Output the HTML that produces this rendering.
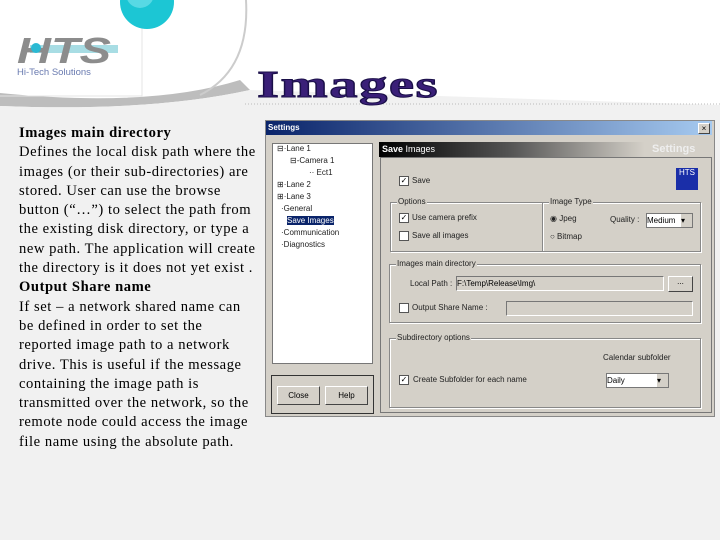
<!DOCTYPE html>
<html><head><style>
body{margin:0;width:720px;height:540px;background:#f1f1f1;position:relative;overflow:hidden;font-family:"Liberation Sans",sans-serif}
.t{position:absolute;left:19px;top:124px;font-family:"Liberation Serif",serif;font-size:14.6px;letter-spacing:0.55px;line-height:19.3px;color:#000;white-space:nowrap}
.d{position:absolute;font-size:8px;color:#222;white-space:nowrap}
.box{position:absolute;border:1px solid #888;box-shadow:1px 1px 0 #fff inset,1px 1px 0 #fff}
.lab{position:absolute;background:#d4d0c8;font-size:8px;padding:0 1px;top:-6px;left:6px;color:#222}
.cb{position:absolute;width:8px;height:8px;background:#fff;border:1px solid #555;font-size:8px;line-height:8px;text-align:center}
.in{position:absolute;background:#d4d0c8;border:1px solid #777;border-right-color:#fff;border-bottom-color:#fff}
.btn{position:absolute;background:#d4d0c8;border:1px solid #fff;border-right-color:#444;border-bottom-color:#444;font-size:8px;text-align:center}
</style></head><body>
<svg style="position:absolute;left:0;top:0" width="720" height="110">
<rect width="720" height="110" fill="#fff"/>
<path d="M0,93 Q150,108 240,80 L250,90 Q150,112 0,106 Z" fill="#bdbdbd"/>
<path d="M0,106 Q150,112 250,90 L720,105 L720,110 L0,110Z" fill="#f1f1f1"/>
<path d="M246,0 Q250,70 200,95" stroke="#ccc" stroke-width="2" fill="none"/>
<path d="M0,96 L142,96 L142,0" stroke="#e4e4e4" fill="none"/>
<circle cx="147" cy="2" r="27" fill="#1cc6d4"/>
<circle cx="140" cy="-6" r="14" fill="#7ee6ee" opacity=".6"/>
<line x1="245" y1="104" x2="720" y2="104" stroke="#bbb" stroke-dasharray="1,2"/>
<rect x="30" y="45" width="88" height="8" fill="#a8dde4"/>
<text x="17" y="63" font-family="Liberation Sans" font-weight="bold" font-style="italic" font-size="36" fill="#8c8c8c" textLength="94" lengthAdjust="spacingAndGlyphs">HTS</text>
<circle cx="36" cy="48" r="5" fill="#2bb9d3"/>
<text x="17" y="75" font-family="Liberation Sans" font-size="9.5" fill="#6a7bb0">Hi-Tech Solutions</text>
<text x="257" y="97" font-family="Liberation Serif" font-weight="bold" font-size="38" fill="#3a1f78" stroke="#1a0f48" stroke-width="1" letter-spacing="1" textLength="182" lengthAdjust="spacingAndGlyphs">Images</text>
</svg>
<div class="t"><b>Images main directory</b><br>Defines the local disk path where the<br>images (or their sub-directories) are<br>stored. User can use the browse<br>button (“…”) to select the path from<br>the existing disk directory, or type a<br>new path. The application will create<br>the directory is it does not yet exist .<br><b>Output Share name</b><br>If set – a network shared name can<br>be defined in order to set the<br>reported image path to a network<br>drive. This is useful if the message<br>containing the image path is<br>transmitted over the network, so the<br>remote node could access the image<br>file name using the absolute path.</div>

<div style="position:absolute;left:265px;top:120px;width:448px;height:295px;background:#d4d0c8;border:1px solid #888"></div>
<div style="position:absolute;left:266px;top:121px;width:446px;height:14px;background:linear-gradient(90deg,#0a246a,#a6caf0);color:#fff;font-size:8px;font-weight:bold;line-height:14px;padding-left:2px;box-sizing:border-box">Settings</div>
<div class="btn" style="left:698px;top:123px;width:10px;height:9px;line-height:9px;color:#000">×</div>
<div style="position:absolute;left:272px;top:143px;width:99px;height:219px;background:#fff;border:1px solid #777"></div>
<div class="d" style="left:277px;top:144px">⊟·Lane 1</div>
<div class="d" style="left:290px;top:156px">⊟-Camera 1</div>
<div class="d" style="left:309px;top:168px">·· Ect1</div>
<div class="d" style="left:277px;top:180px">⊞·Lane 2</div>
<div class="d" style="left:277px;top:192px">⊞·Lane 3</div>
<div class="d" style="left:281px;top:204px">·General</div>
<div class="d" style="left:287px;top:216px;background:#0a246a;color:#fff">Save Images</div>
<div class="d" style="left:281px;top:228px">·Communication</div>
<div class="d" style="left:281px;top:240px">·Diagnostics</div>
<div style="position:absolute;left:271px;top:375px;width:101px;height:37px;border:1px solid #333"></div>
<div class="btn" style="left:277px;top:386px;width:41px;height:17px;line-height:17px">Close</div>
<div class="btn" style="left:325px;top:386px;width:41px;height:17px;line-height:17px">Help</div>
<div style="position:absolute;left:379px;top:142px;width:332px;height:15px;background:linear-gradient(90deg,#000 0%,#555 40%,#d4d0c8 80%);color:#fff;font-size:9px;line-height:15px;padding-left:3px;box-sizing:border-box"><b>Save</b> Images</div>
<div style="position:absolute;left:652px;top:143px;font-size:11px;font-weight:bold;color:#eee">Settings</div>
<div style="position:absolute;left:380px;top:157px;width:330px;height:254px;border:1px solid #777"></div>
<div style="position:absolute;left:676px;top:168px;width:22px;height:22px;background:#1a2ea8;color:#fff;font-size:8px;text-align:center">HTS</div>
<div class="cb" style="left:399px;top:176px">✓</div><div class="d" style="left:412px;top:176px">Save</div>
<div class="box" style="left:390px;top:202px;width:151px;height:48px"><span class="lab">Options</span></div>
<div class="cb" style="left:399px;top:213px">✓</div><div class="d" style="left:412px;top:213px">Use camera prefix</div>
<div class="cb" style="left:399px;top:231px"></div><div class="d" style="left:412px;top:231px">Save all images</div>
<div class="box" style="left:542px;top:202px;width:157px;height:48px"><span class="lab">Image Type</span></div>
<div class="d" style="left:550px;top:214px">◉ Jpeg</div><div class="d" style="left:550px;top:232px">○ Bitmap</div>
<div class="d" style="left:610px;top:215px">Quality :</div>
<div style="position:absolute;left:646px;top:213px;width:45px;height:13px;background:#fff;border:1px solid #777;font-size:8px;line-height:13px">Medium<span style="position:absolute;right:0;top:0;width:11px;height:13px;background:#d4d0c8">▾</span></div>
<div class="box" style="left:389px;top:264px;width:310px;height:57px"><span class="lab">Images main directory</span></div>
<div class="d" style="left:410px;top:279px">Local Path :</div>
<div class="in" style="left:456px;top:276px;width:206px;height:13px;font-size:8px;line-height:13px">F:\Temp\Release\Img\</div>
<div class="btn" style="left:668px;top:276px;width:23px;height:14px">...</div>
<div class="cb" style="left:399px;top:303px"></div><div class="d" style="left:412px;top:303px">Output Share Name :</div>
<div class="in" style="left:506px;top:301px;width:185px;height:13px"></div>
<div class="box" style="left:389px;top:338px;width:310px;height:68px"><span class="lab">Subdirectory options</span></div>
<div class="d" style="left:603px;top:353px">Calendar subfolder</div>
<div class="cb" style="left:399px;top:375px">✓</div><div class="d" style="left:413px;top:375px">Create Subfolder for each name</div>
<div style="position:absolute;left:606px;top:373px;width:61px;height:13px;background:#fff;border:1px solid #777;font-size:8px;line-height:13px">Daily<span style="position:absolute;right:0;top:0;width:11px;height:13px;background:#d4d0c8">▾</span></div>
</body></html>
